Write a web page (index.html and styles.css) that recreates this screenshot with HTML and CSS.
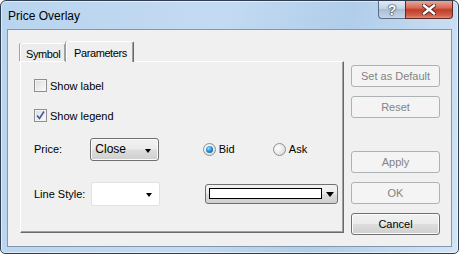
FILE: index.html
```html
<!DOCTYPE html>
<html>
<head>
  <title>Price Overlay</title>
  <link rel="stylesheet" href="styles.css">
</head>
<body>
  <div class="window">
    <div class="titlebar">
      <span class="title">Price Overlay</span>
      <div class="caption-buttons">
        <span class="cap help">?</span>
        <span class="cap close">
          <svg width="14" height="11" viewBox="0 0 14 11">
            <path d="M2 1.5 L12 9.5 M12 1.5 L2 9.5" stroke="#4a2018" stroke-width="4.2" stroke-linecap="square"/>
            <path d="M2 1.5 L12 9.5 M12 1.5 L2 9.5" stroke="#ffffff" stroke-width="2.4" stroke-linecap="square"/>
          </svg>
        </span>
      </div>
    </div>

    <div class="client">
      <div class="tabs">
        <div class="tab-strip">
          <span class="tab">Symbol</span>
          <span class="tab active">Parameters</span>
        </div>
        <div class="tab-panel">
          <div class="check-row">
            <span class="checkbox"></span>
            <span>Show label</span>
          </div>
          <div class="check-row">
            <span class="checkbox">
              <svg width="9" height="9" viewBox="0 0 9 9">
                <path d="M1 4.5 L3.5 7.5 L8 0.5" fill="none" stroke="#3f5a9c" stroke-width="1.6"/>
              </svg>
            </span>
            <span>Show legend</span>
          </div>
          <div class="field-row price-row">
            <span class="field-label">Price:</span>
            <span class="combo button-combo">
              <span class="combo-text">Close</span>
              <span class="arrow"></span>
            </span>
            <span class="radio-item bid">
              <span class="radio checked"></span>
              <span>Bid</span>
            </span>
            <span class="radio-item">
              <span class="radio"></span>
              <span>Ask</span>
            </span>
          </div>
          <div class="field-row style-row">
            <span class="field-label">Line Style:</span>
            <span class="combo white-combo">
              <span class="arrow"></span>
            </span>
            <span class="combo color-combo">
              <span class="swatch"></span>
              <span class="arrow big"></span>
            </span>
          </div>
        </div>
      </div>

      <div class="side-buttons">
        <button disabled>Set as Default</button>
        <button disabled>Reset</button>
        <button class="apply" disabled>Apply</button>
        <button disabled>OK</button>
        <button>Cancel</button>
      </div>
    </div>
  </div>
</body>
</html>
```

FILE: styles.css
```css
body {
  margin: 0;
  background: #ffffff;
  font-family: "Liberation Sans", Arial, sans-serif;
  font-size: 11px;
  color: #000;
}
.window {
  width: 459px;
  height: 254px;
  box-sizing: border-box;
  border: 1px solid #2f3e50;
  border-radius: 6px 6px 5px 5px;
  background: linear-gradient(100deg, #b9d4ee 0%, #c3dbf2 45%, #b0cdea 70%, #d2e4f6 100%);
  box-shadow: inset 0 0 0 1px rgba(255,255,255,0.55);
  display: flex;
  flex-direction: column;
}
.titlebar {
  height: 28px;
  flex-shrink: 0;
  display: flex;
  align-items: flex-start;
}
.title {
  font-size: 12px;
  margin: 8px 0 0 7px;
  color: #000;
}
.caption-buttons {
  margin-left: auto;
  margin-right: 5px;
  display: flex;
}
.cap {
  height: 18px;
  box-sizing: border-box;
  display: flex;
  align-items: center;
  justify-content: center;
}
.help {
  width: 27px;
  border: 1px solid #5b6e85;
  border-top: none;
  border-right: none;
  border-radius: 0 0 0 4px;
  background: linear-gradient(#e2ebf5, #c3d3e4 45%, #a9bdd3 50%, #c6d6e7);
  color: #fff;
  font-weight: bold;
  font-size: 14px;
  text-shadow: 0 0 1px #2a3442, 0 0 1px #2a3442, 0 0 2px #2a3442;
}
.close {
  width: 48px;
  border: 1px solid #5e2a22;
  border-top: none;
  border-radius: 0 0 4px 0;
  background: linear-gradient(#e9a897, #d56a56 40%, #c13d28 52%, #d2604a 85%, #e08d78);
}
.client {
  flex: 1;
  min-height: 0;
  margin: 0 6px 6px 6px;
  border: 1px solid #8397ac;
  background: #f0f0f0;
  padding: 11px 11px 13px 12px;
  display: flex;
  align-items: flex-start;
  gap: 7px;
}
.tabs {
  width: 324px;
  display: flex;
  flex-direction: column;
}
.tab-strip {
  height: 20px;
  display: flex;
  align-items: flex-end;
}
.tab {
  box-sizing: border-box;
  height: 18px;
  width: 46px;
  padding: 4px 0 0 5px;
  border: 1px solid #fff;
  border-bottom: none;
  border-right-color: #696969;
  border-radius: 2px 2px 0 0;
  box-shadow: inset -1px 0 0 #a0a0a0, -1px 0 0 #a0a0a0;
  background: #ececec;
  letter-spacing: -0.4px;
  white-space: nowrap;
}
.tab.active {
  height: 21px;
  width: 68px;
  margin-bottom: -1px;
  padding: 5px 0 0 7px;
  background: #f0f0f0;
  position: relative;
  z-index: 1;
}
.tab-panel {
  height: 172px;
  box-sizing: border-box;
  border: 1px solid #fff;
  border-right-color: #696969;
  border-bottom-color: #696969;
  box-shadow: inset -1px -1px 0 #a0a0a0;
  padding: 17px 0 0 13px;
  display: flex;
  flex-direction: column;
}
.check-row {
  height: 13px;
  display: flex;
  align-items: center;
  gap: 3px;
  margin-bottom: 17px;
}
.checkbox {
  width: 13px;
  height: 13px;
  box-sizing: border-box;
  border: 1px solid #8e8f8f;
  background: linear-gradient(135deg, #dcdcdc, #fbfbfb);
  box-shadow: inset 0 0 0 1px #f4f4f4;
  display: flex;
  align-items: center;
  justify-content: center;
}
.field-row {
  display: flex;
  align-items: center;
}
.price-row {
  height: 22px;
  margin-top: -1px;
}
.style-row {
  height: 23px;
  margin-top: 22px;
}
.field-label {
  width: 57px;
}
.combo {
  box-sizing: border-box;
  display: flex;
  align-items: center;
  position: relative;
}
.button-combo {
  width: 69px;
  height: 23px;
  border: 1px solid #707070;
  border-radius: 3px;
  background: linear-gradient(#f2f2f2, #ebebeb 48%, #dddddd 52%, #cfcfcf);
  box-shadow: inset 0 0 0 1px #fbfbfb;
  padding-left: 4px;
  font-size: 12px;
}
.white-combo {
  width: 69px;
  height: 24px;
  border: 1px solid #e2e2e2;
  border-radius: 2px;
  background: #fff;
}
.arrow {
  position: absolute;
  right: 7px;
  top: 10px;
  border-left: 3.5px solid transparent;
  border-right: 3.5px solid transparent;
  border-top: 4px solid #000;
}
.color-combo {
  width: 133px;
  height: 20px;
  margin-left: 45px;
  border: 1px solid #707070;
  border-radius: 3px;
  background: linear-gradient(#f2f2f2, #ebebeb 48%, #dddddd 52%, #cfcfcf);
  padding-left: 3px;
}
.swatch {
  width: 113px;
  height: 11px;
  box-sizing: border-box;
  border: 1px solid #000;
  background: #fff;
}
.arrow.big {
  right: 3px;
  top: 7px;
  border-left-width: 4.5px;
  border-right-width: 4.5px;
  border-top-width: 5px;
}
.radio-item {
  display: flex;
  align-items: center;
  gap: 3px;
  width: 71px;
}
.bid {
  margin-left: 44px;
}
.radio {
  width: 13px;
  height: 13px;
  box-sizing: border-box;
  border: 1px solid #8e8f8f;
  border-radius: 50%;
  background: radial-gradient(circle at 35% 35%, #ffffff, #e6e6e6 60%, #cfcfcf);
  display: flex;
  align-items: center;
  justify-content: center;
}
.radio.checked::after {
  content: "";
  width: 7px;
  height: 7px;
  border-radius: 50%;
  background: radial-gradient(circle at 40% 35%, #9fe0ff, #2a8fd8 45%, #0d4f94);
}
.side-buttons {
  width: 89px;
  padding-top: 24px;
  display: flex;
  flex-direction: column;
  gap: 9px;
}
button {
  height: 22px;
  flex-shrink: 0;
  box-sizing: border-box;
  border: 1px solid #707070;
  border-radius: 3px;
  background: linear-gradient(#f2f2f2, #ebebeb 48%, #dddddd 52%, #cfcfcf);
  box-shadow: inset 0 0 0 1px #fbfbfb;
  font-family: "Liberation Sans", Arial, sans-serif;
  font-size: 11px;
  color: #000;
  padding: 0;
}
button:disabled {
  border-color: #adb2b5;
  background: #f4f4f4;
  box-shadow: none;
  color: #838383;
}
.apply {
  margin-top: 24px;
}
```
